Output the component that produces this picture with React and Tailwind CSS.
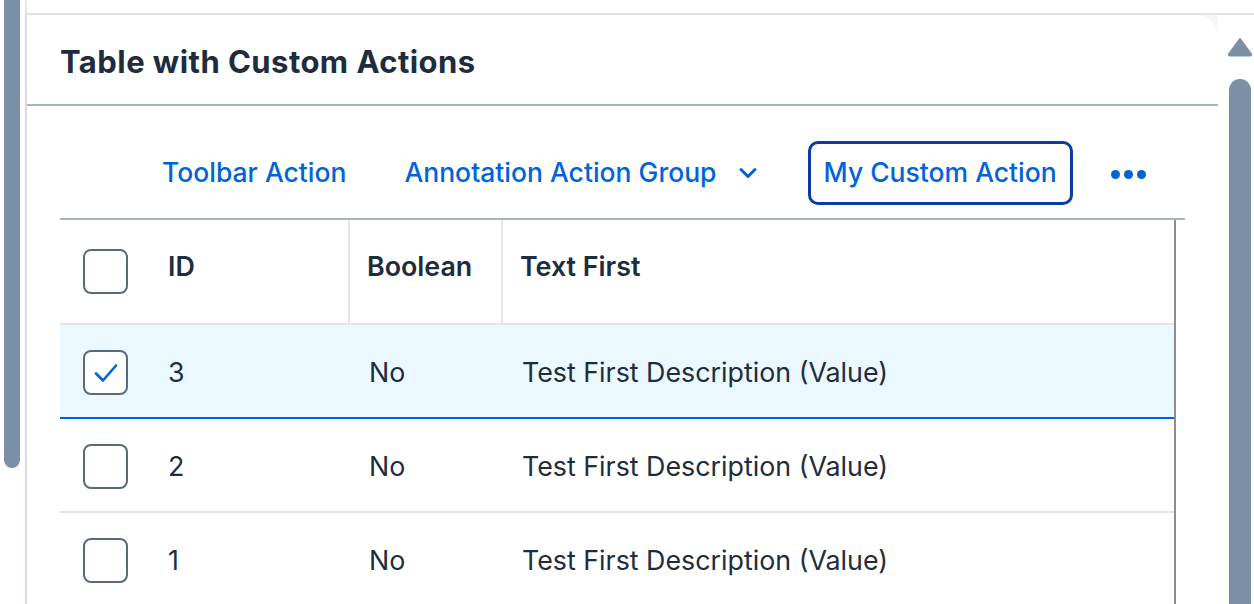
import { ChevronDown } from "lucide-react";

const rows = [
  { id: "3", bool: "No", text: "Test First Description (Value)", selected: true },
  { id: "2", bool: "No", text: "Test First Description (Value)" },
  { id: "1", bool: "No", text: "Test First Description (Value)" },
];

function Checkbox({ checked }) {
  return (
    <div className="w-[45px] h-[45px] rounded-[8px] border-2 border-[#556b82] bg-white flex items-center justify-center">
      {checked && (
        <svg width="26" height="22" viewBox="0 0 26 22" fill="none">
          <path d="M3 11.5 L10 18.5 L23 3.5" stroke="#0064d9" strokeWidth="2.6" strokeLinecap="round" strokeLinejoin="round" />
        </svg>
      )}
    </div>
  );
}

export default function App() {
  return (
    <div className="w-[1254px] h-[604px] overflow-hidden bg-white flex text-[#1d2d3e]" style={{ fontFamily: "Inter, 'Noto Sans', sans-serif" }}>
      {/* left scroll strip */}
      <div className="w-[25px] shrink-0 pl-[4px]">
        <div className="w-[16px] h-[468px] bg-[#7b8fa6] rounded-b-[8px]"></div>
      </div>

      {/* main */}
      <div className="flex-1 flex flex-col border-l-2 border-[#e4e6e8] bg-[#f7f8f9]">
        <div className="h-[15px] bg-white border-b-2 border-[#e1e3e5] shrink-0"></div>
        <div className="flex flex-1">
          <div className="flex-1 bg-white rounded-tr-[22px] flex flex-col shadow-[-2px_0_3px_rgba(0,0,0,0.06)]">
            <div className="h-[91px] flex items-center pl-[33px] pt-[5px] border-b-2 border-[#a9b4be] shrink-0">
              <h1 className="text-[31px] font-bold tracking-[0.45px]">Table with Custom Actions</h1>
            </div>

            <div className="pl-[33px] pr-[33px] flex flex-col">
              <div className="h-[112px] pt-[22px] flex items-center text-[#0064d9] text-[26.5px] font-medium">
                <span className="ml-[102px]">Toolbar Action</span>
                <span className="ml-[58px] flex items-center">
                  Annotation Action Group
                  <ChevronDown className="ml-[17px] w-[28px] h-[28px]" strokeWidth={2.6} />
                </span>
                <span className="ml-[46px] h-[64px] px-[13px] flex items-center border-[3px] border-[#0a3ca5] rounded-[10px]">
                  My Custom Action
                </span>
                <span className="ml-[38px] flex gap-[4px] mt-[2px]">
                  <span className="w-[9px] h-[9px] rounded-full bg-[#0064d9]"></span>
                  <span className="w-[9px] h-[9px] rounded-full bg-[#0064d9]"></span>
                  <span className="w-[9px] h-[9px] rounded-full bg-[#0064d9]"></span>
                </span>
              </div>

              <div className="border-t-2 border-[#a9b4be] w-[1125px]">
                <div className="w-[1116px] border-r-2 border-[#8d8d8d]">
                  {/* header */}
                  <div className="h-[105px] flex border-b-2 border-[#e5e5e5] text-[26.8px] font-semibold">
                    <div className="w-[108px] flex items-center pl-[23px] shrink-0">
                      <Checkbox />
                    </div>
                    <div className="w-[182px] flex items-center pb-[10px] border-r-2 border-[#e5e5e5] shrink-0">ID</div>
                    <div className="w-[153px] flex items-center pb-[10px] pl-[17px] border-r-2 border-[#e5e5e5] shrink-0">Boolean</div>
                    <div className="flex-1 flex items-center pb-[10px] pl-[17px]">Text First</div>
                  </div>
                  {rows.map((r) => (
                    <div
                      key={r.id}
                      className={`h-[94px] pt-[3px] flex text-[26.8px] border-b-2 ${r.selected ? "bg-[#ebf8ff] border-[#0064d9]" : "bg-white border-[#e5e5e5]"}`}
                    >
                      <div className="w-[108px] flex items-center pl-[23px] shrink-0">
                        <Checkbox checked={r.selected} />
                      </div>
                      <div className="w-[182px] flex items-center shrink-0">{r.id}</div>
                      <div className="w-[153px] flex items-center pl-[19px] shrink-0">{r.bool}</div>
                      <div className="flex-1 flex items-center pl-[19px]">{r.text}</div>
                    </div>
                  ))}
                </div>
              </div>
            </div>
          </div>

          {/* right scrollbar */}
          <div className="w-[36px] shrink-0 bg-white flex flex-col items-center pl-[8px]">
            <svg width="26" height="20" viewBox="0 0 26 20" className="mt-[22px]">
              <path d="M13 2 L24 17 Q24.5 18.5 23 18.5 L3 18.5 Q1.5 18.5 2 17 Z" fill="#7b8fa6" stroke="#7b8fa6" strokeWidth="2" strokeLinejoin="round" />
            </svg>
            <div className="w-[22px] flex-1 mt-[22px] bg-[#7b8fa6] rounded-t-[11px]"></div>
          </div>
        </div>
      </div>
    </div>
  );
}
